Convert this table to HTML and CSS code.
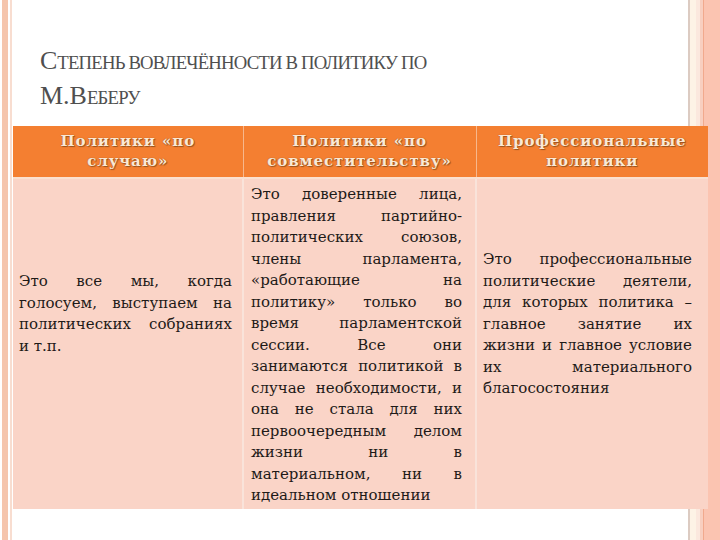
FILE: index.html
```html
<!DOCTYPE html>
<html lang="ru">
<head>
<meta charset="utf-8">
<link rel="stylesheet" href="styles.css">
</head>
<body>
<div class="slide">
  <h1 class="title">С<span class="sc">тепень вовлечённости в политику по</span><br>М.В<span class="sc">еберу</span></h1>
  <table class="grid">
    <colgroup>
      <col class="w1">
      <col class="w2">
      <col class="w3">
    </colgroup>
    <thead>
      <tr>
        <th class="c1">Политики «по случаю»</th>
        <th class="c2">Политики «по совместительству»</th>
        <th class="c3">Профессиональные политики</th>
      </tr>
    </thead>
    <tbody>
      <tr>
        <td class="c1"><p class="t1">Это все мы, когда голосуем, выступаем на политических собраниях и т.п.</p></td>
        <td class="c2"><p class="t2">Это доверенные лица, правления партийно-политических союзов, члены парламента, «работающие на политику» только во время парламентской сессии. Все они занимаются политикой в случае необходимости, и она не стала для них первоочередным делом жизни ни в материальном, ни в идеальном отношении</p></td>
        <td class="c3"><p class="t3">Это профессиональные политические деятели, для которых политика – главное занятие их жизни и главное условие их материального благосостояния</p></td>
      </tr>
    </tbody>
  </table>
</div>
</body>
</html>
```
FILE: styles.css
```css
html, body {
  margin: 0;
  padding: 0;
}
body {
  width: 720px;
  height: 540px;
  overflow: hidden;
  background: linear-gradient(to right,
    #ffffff 0, #ffffff 2px,
    #f5c5ad 2px, #f5c5ad 8px,
    #ffffff 8px, #ffffff 10px,
    #f8ddd0 10px, #f8ddd0 12px,
    #ffffff 12px, #ffffff 688px,
    #dccbc2 688px, #dccbc2 690px,
    #fdf3e6 690px, #fdf3e6 696px,
    #fbe8de 696px, #fbe8de 700px,
    #f8cfc0 700px, #f8cfc0 703px,
    #f1a98d 703px, #f1a98d 704px,
    #fbc4b1 704px, #fbc4b1 720px);
}
.slide {
  padding-top: 44px;
}
.title {
  margin: 0 0 0 40px;
  font-family: "Liberation Serif", serif;
  font-weight: normal;
  font-size: 26px;
  line-height: 33px;
  color: #4f4f4f;
  height: 82px;
}
.sc {
  text-transform: uppercase;
  font-size: 0.72em;
  letter-spacing: -0.8px;
}
.grid {
  margin-left: 13px;
  width: 695px;
  border-collapse: collapse;
  table-layout: fixed;
}
.w1 { width: 230px; }
.w2 { width: 233px; }
.w3 { width: 232px; }
.grid th {
  background: #f47f31;
  color: #fbe8d4;
  font-family: "DejaVu Serif", serif;
  font-weight: bold;
  font-size: 15px;
  letter-spacing: 0.9px;
  line-height: 20px;
  padding: 5px 6px 6px;
  text-align: center;
  vertical-align: top;
  text-shadow: 0 0 1px #8a4a1c, 1px 1px 1px #9a5420;
  border-bottom: 2px solid #fbe0cf;
}
.grid th + th {
  border-left: 1px solid #f7b78c;
}
.grid th.c1 { padding-left: 36px; padding-right: 36px; }
.grid td {
  background: #fad4c7;
  vertical-align: top;
  height: 330px;
  padding: 0;
}
.grid td + td {
  border-left: 2px solid #f9e3da;
}
.grid td p {
  margin: 0;
  font-family: "DejaVu Serif", serif;
  font-size: 15px;
  line-height: 21.5px;
  color: #1e1a18;
  text-align: justify;
  hyphens: none;
}
.t1 { padding: 92px 10px 0 6px; }
.t2 { padding: 5px 13px 0 7px; }
.t3 { padding: 70px 16px 0 6px; }
```
